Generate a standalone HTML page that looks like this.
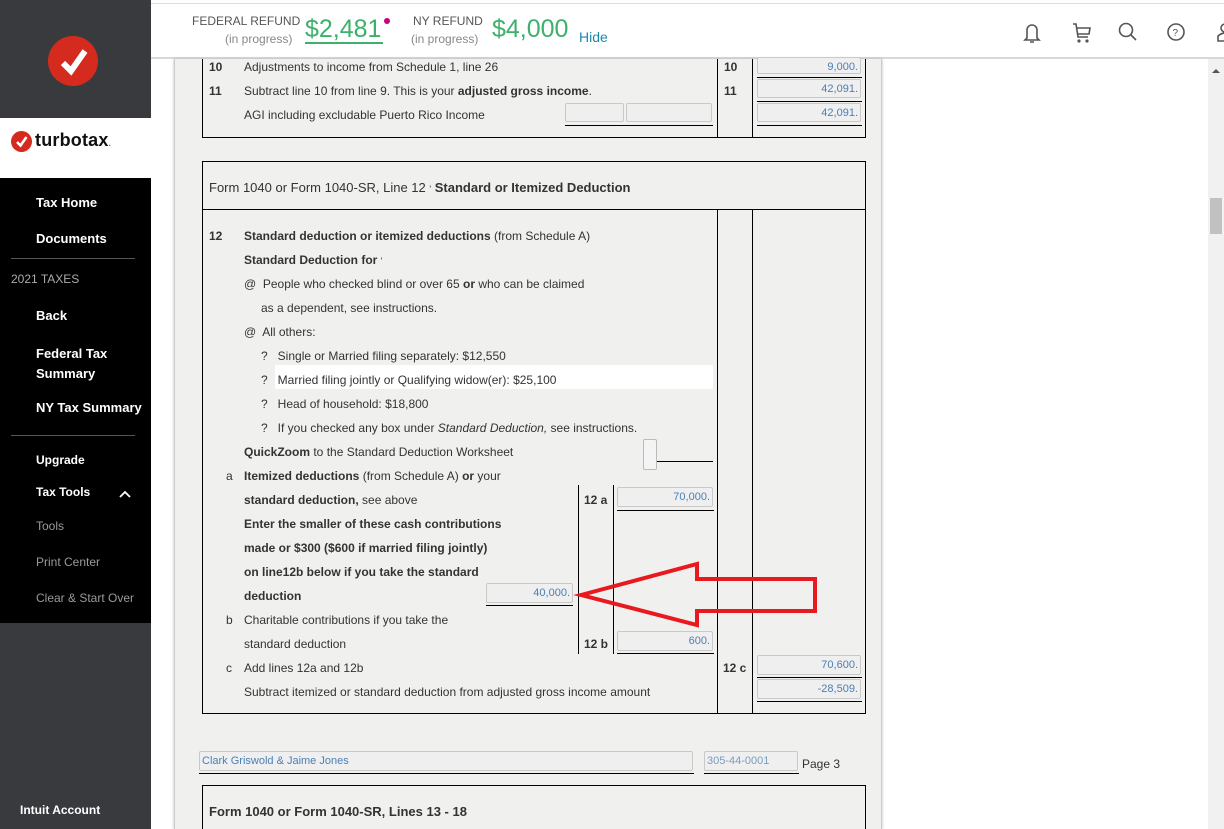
<!DOCTYPE html>
<html style="width:1224px;height:829px;overflow:hidden"><head><meta charset="utf-8">
<style>
*{margin:0;padding:0;box-sizing:border-box}
body{width:1224px;height:829px;overflow:hidden;background:#fff;font-family:"Liberation Sans",Arial,sans-serif;position:relative}
.a{position:absolute}
.t{position:absolute;font-size:12px;line-height:14px;color:#333;white-space:nowrap}
.b{font-weight:bold}
.s{position:absolute;color:#fff;font-size:13px;font-weight:bold;line-height:16px;white-space:nowrap}
.g{color:#9a9a9a;font-weight:normal;font-size:12px}
.f{position:absolute;border:1px solid #c9c9c9;background:#efefef;border-radius:2px;color:#4a7fb5;font-size:11px;text-align:right;padding-right:2px;padding-top:2px;line-height:14px;font-weight:300}
.u{position:absolute;height:1px;background:#000}
.vl{position:absolute;width:1px;background:#000}
</style></head><body>
<!-- sidebar -->
<div class="a" style="left:0;top:0;width:151px;height:118px;background:#393a3d"></div>
<div class="a" style="left:48px;top:36px;width:50px;height:50px;border-radius:50%;background:#d52b1e"></div>
<svg class="a" style="left:48px;top:36px" width="50" height="50"><path d="M15 27 L23 35 L37 15" stroke="#fff" stroke-width="6" fill="none" stroke-linejoin="miter"/></svg>
<div class="a" style="left:0;top:118px;width:151px;height:60px;background:#fff"></div>
<div class="a" style="left:11px;top:131px;width:21px;height:21px;border-radius:50%;background:#d52b1e"></div>
<svg class="a" style="left:11px;top:131px" width="21" height="21"><path d="M6 11 L9.5 14.5 L15.5 6" stroke="#fff" stroke-width="2.6" fill="none"/></svg>
<div class="a" style="left:35px;top:130px;font-size:18px;font-weight:bold;color:#111;letter-spacing:0.2px">turbotax<span style="font-size:8px;color:#666">.</span></div>
<div class="a" style="left:0;top:178px;width:151px;height:445px;background:#000"></div>
<div class="a" style="left:0;top:623px;width:151px;height:206px;background:#393a3d"></div>
<div class="s" style="left:36px;top:195px">Tax Home</div>
<div class="s" style="left:36px;top:231px">Documents</div>
<div class="a" style="left:11px;top:258px;width:124px;height:1px;background:#555"></div>
<div class="s g" style="left:11px;top:271px;color:#aaa">2021 TAXES</div>
<div class="s" style="left:36px;top:308px">Back</div>
<div class="s" style="left:36px;top:344px;line-height:20px">Federal Tax<br>Summary</div>
<div class="s" style="left:36px;top:400px">NY Tax Summary</div>
<div class="a" style="left:11px;top:435px;width:124px;height:1px;background:#555"></div>
<div class="s" style="left:36px;top:452px;font-size:12px">Upgrade</div>
<div class="s" style="left:36px;top:484px;font-size:12px">Tax Tools</div>
<svg class="a" style="left:119px;top:490px" width="12" height="8"><path d="M1 7 L6 2 L11 7" stroke="#fff" stroke-width="1.8" fill="none"/></svg>
<div class="s g" style="left:36px;top:518px">Tools</div>
<div class="s g" style="left:36px;top:554px">Print Center</div>
<div class="s g" style="left:36px;top:590px">Clear &amp; Start Over</div>
<div class="s" style="left:20px;top:802px;font-size:12px">Intuit Account</div>
<!-- header -->
<div class="a" style="left:151px;top:3px;width:1073px;height:1px;background:#ddd"></div>
<div class="a" style="left:151px;top:57px;width:1073px;height:2px;background:#d8d8d8"></div>
<div class="a" style="left:192px;top:14px;font-size:12px;color:#555">FEDERAL REFUND</div>
<div class="a" style="left:225px;top:32px;font-size:12px;color:#888">(in progress)</div>
<div class="a" style="left:305px;top:14px;font-size:25px;color:#3cb06c;line-height:30px">$2,481</div>
<div class="a" style="left:305px;top:42px;width:78px;height:2px;background:#3cb06c"></div>
<div class="a" style="left:384px;top:18px;width:6px;height:6px;border-radius:50%;background:#c8007a"></div>
<div class="a" style="left:413px;top:14px;font-size:12px;color:#555">NY REFUND</div>
<div class="a" style="left:411px;top:32px;font-size:12px;color:#888">(in progress)</div>
<div class="a" style="left:492px;top:14px;font-size:25px;color:#3cb06c;line-height:30px">$4,000</div>
<div class="a" style="left:579px;top:29px;font-size:14px;color:#1a8aa8">Hide</div>
<svg class="a" style="left:1020px;top:18px" width="210" height="28" fill="none" stroke="#555" stroke-width="1.6">
<path d="M7 20 L7 12 A5 5 0 0 1 17 12 L17 20 L19 22 L5 22 Z M10 24 L14 24"/>
<path d="M53 6 L56 6 L58 19 L68 19 M57 10 L70 10 L69 16 L58 16"/><circle cx="59" cy="23" r="0.8"/><circle cx="67" cy="23" r="0.8"/>
<circle cx="106" cy="12" r="6.5"/><path d="M111 17 L116 22"/>
<circle cx="156" cy="14" r="8"/><text x="152.5" y="18" font-size="10" fill="#555" stroke="none" font-family="Liberation Sans">?</text>
<circle cx="205" cy="10" r="4"/><path d="M198 23 L198 18 Q205 12 212 18 L212 23 Z"/>
</svg>
<!-- scrollbar -->
<div class="a" style="left:1208px;top:59px;width:16px;height:770px;background:#f1f1f1"></div>
<div class="a" style="left:1210px;top:198px;width:12px;height:36px;background:#c1c1c1"></div>
<svg class="a" style="left:1212px;top:68px" width="8" height="6"><path d="M0 5 L4 1 L8 5Z" fill="#555"/></svg>
<!-- page -->
<div class="a" style="left:174px;top:59px;width:708px;height:770px;background:#f0f0ef;border-left:1px solid #ccc;border-right:1px solid #ccc;box-shadow:0 0 3px #bbb"></div>
<!-- box 1 -->
<div class="a" style="left:202px;top:59px;width:664px;height:79px;border:1px solid #000;border-top:none"></div>
<div class="vl" style="left:717px;top:59px;height:78px"></div>
<div class="vl" style="left:752px;top:59px;height:78px"></div>
<div class="t b" style="left:209px;top:60px">10</div>
<div class="t" style="left:244px;top:60px">Adjustments to income from Schedule 1, line 26</div>
<div class="t b" style="left:724px;top:60px">10</div>
<div class="f" style="left:757px;top:57px;width:104px;height:17px">9,000.</div><div class="u" style="left:757px;top:77px;width:105px"></div>
<div class="t b" style="left:209px;top:84px">11</div>
<div class="t" style="left:244px;top:84px">Subtract line 10 from line 9. This is your <b>adjusted gross income</b>.</div>
<div class="t b" style="left:724px;top:84px">11</div>
<div class="f" style="left:757px;top:79px;width:104px;height:19px">42,091.</div><div class="u" style="left:757px;top:101px;width:105px"></div>
<div class="t" style="left:244px;top:108px">AGI including excludable Puerto Rico Income</div>
<div class="f" style="left:565px;top:103px;width:59px;height:19px"></div>
<div class="f" style="left:626px;top:103px;width:86px;height:19px"></div><div class="u" style="left:565px;top:125px;width:148px"></div>
<div class="f" style="left:757px;top:103px;width:104px;height:19px">42,091.</div><div class="u" style="left:757px;top:125px;width:105px"></div>
<!-- box 2 -->
<div class="a" style="left:202px;top:161px;width:664px;height:553px;border:1px solid #000"></div>
<div class="t" style="left:209px;top:180px;font-size:13px;line-height:15px">Form 1040 or Form 1040-SR, Line 12 <span style="font-size:9px">'</span> <b>Standard or Itemized Deduction</b></div>
<div class="u" style="left:202px;top:209px;width:664px"></div>
<div class="vl" style="left:717px;top:209px;height:504px"></div>
<div class="vl" style="left:752px;top:209px;height:504px"></div>
<div class="a" style="left:275px;top:365px;width:438px;height:24px;background:#fff"></div>
<div class="t b" style="left:209px;top:229px">12</div>
<div class="t" style="left:244px;top:229px"><b>Standard deduction or itemized deductions</b> (from Schedule A)</div>
<div class="t b" style="left:244px;top:253px">Standard Deduction for <span style="font-weight:normal;font-size:9px">'</span></div>
<div class="t" style="left:244px;top:277px">@&nbsp; People who checked blind or over 65 <b>or</b> who can be claimed</div>
<div class="t" style="left:261px;top:301px">as a dependent, see instructions.</div>
<div class="t" style="left:244px;top:325px">@&nbsp; All others:</div>
<div class="t" style="left:261px;top:349px">?&nbsp;&nbsp; Single or Married filing separately: $12,550</div>
<div class="t" style="left:261px;top:373px">?&nbsp;&nbsp; Married filing jointly or Qualifying widow(er): $25,100</div>
<div class="t" style="left:261px;top:397px">?&nbsp;&nbsp; Head of household: $18,800</div>
<div class="t" style="left:261px;top:421px">?&nbsp;&nbsp; If you checked any box under <i>Standard Deduction,</i> see instructions.</div>
<div class="t" style="left:244px;top:445px"><b>QuickZoom</b> to the Standard Deduction Worksheet</div>
<div class="a" style="left:643px;top:439px;width:14px;height:31px;border:1px solid #bbb;border-radius:2px;background:#f4f4f4"></div>
<div class="u" style="left:657px;top:461px;width:56px"></div>
<div class="t" style="left:226px;top:469px">a</div>
<div class="t" style="left:244px;top:469px"><b>Itemized deductions</b> (from Schedule A) <b>or</b> your</div>
<div class="t" style="left:244px;top:493px"><b>standard deduction,</b> see above</div>
<div class="vl" style="left:578px;top:485px;height:169px"></div>
<div class="vl" style="left:613px;top:485px;height:169px"></div>
<div class="t b" style="left:584px;top:493px">12 a</div>
<div class="f" style="left:617px;top:487px;width:96px;height:20px">70,000.</div><div class="u" style="left:617px;top:510px;width:97px"></div>
<div class="t b" style="left:244px;top:517px">Enter the smaller of these cash contributions</div>
<div class="t b" style="left:244px;top:541px">made or $300 ($600 if married filing jointly)</div>
<div class="t b" style="left:244px;top:565px">on line12b below if you take the standard</div>
<div class="t b" style="left:244px;top:589px">deduction</div>
<div class="f" style="left:486px;top:583px;width:87px;height:20px">40,000.</div><div class="u" style="left:486px;top:605px;width:87px"></div>
<div class="t" style="left:226px;top:613px">b</div>
<div class="t" style="left:244px;top:613px">Charitable contributions if you take the</div>
<div class="t" style="left:244px;top:637px">standard deduction</div>
<div class="t b" style="left:584px;top:637px">12 b</div>
<div class="f" style="left:617px;top:631px;width:96px;height:20px">600.</div><div class="u" style="left:617px;top:653px;width:97px"></div>
<div class="t" style="left:226px;top:661px">c</div>
<div class="t" style="left:244px;top:661px">Add lines 12a and 12b</div>
<div class="t b" style="left:723px;top:661px">12 c</div>
<div class="f" style="left:757px;top:655px;width:104px;height:20px">70,600.</div><div class="u" style="left:757px;top:677px;width:105px"></div>
<div class="t" style="left:244px;top:685px">Subtract itemized or standard deduction from adjusted gross income amount</div>
<div class="f" style="left:757px;top:679px;width:104px;height:20px">-28,509.</div><div class="u" style="left:757px;top:701px;width:105px"></div>
<!-- arrow -->
<svg class="a" style="left:0;top:0" width="1224" height="829"><polygon points="581,595 697,564 697,579 815,579 815,611 697,611 697,625" fill="none" stroke="#e8191f" stroke-width="4" stroke-linejoin="miter"/></svg>
<!-- footer line -->
<div class="f" style="left:199px;top:751px;width:494px;height:20px;text-align:left;padding-left:2px">Clark Griswold &amp; Jaime Jones</div><div class="u" style="left:199px;top:773px;width:495px"></div>
<div class="f" style="left:704px;top:751px;width:94px;height:20px;text-align:left;padding-left:2px;color:#7a9cc0">305-44-0001</div><div class="u" style="left:704px;top:773px;width:95px"></div>
<div class="t" style="left:802px;top:757px">Page 3</div>
<div class="a" style="left:202px;top:785px;width:664px;height:44px;border:1px solid #000;border-bottom:none"></div>
<div class="t b" style="left:209px;top:804px;font-size:13px;line-height:15px">Form 1040 or Form 1040-SR, Lines 13 - 18</div>
</body></html>
